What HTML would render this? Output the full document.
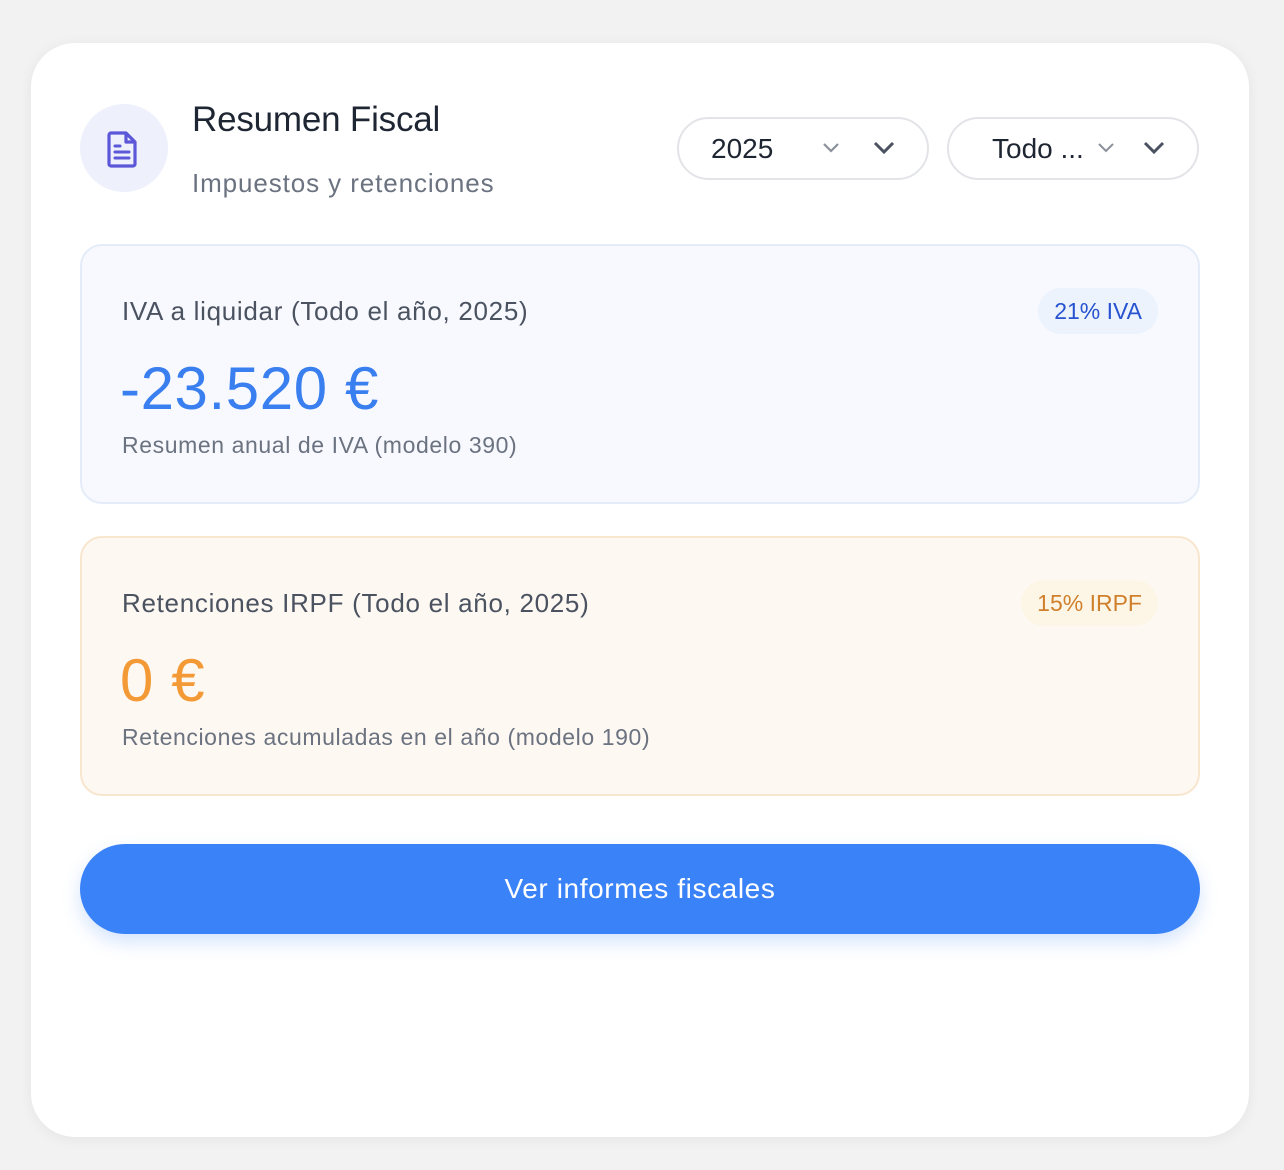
<!DOCTYPE html>
<html><head><meta charset="utf-8"><style>
*{box-sizing:border-box;margin:0;padding:0}
body{width:1284px;height:1170px;background:#f2f2f3;font-family:"Liberation Sans",sans-serif;position:relative;overflow:hidden}
.card{position:absolute;left:31px;top:43px;width:1218px;height:1094px;background:#fff;border-radius:44px;box-shadow:0 2px 14px rgba(0,0,0,.06)}
.abs{position:absolute}
.ic{left:80px;top:104px;width:88px;height:88px;border-radius:50%;background:#eef0fc}
.title{left:192px;top:100px;font-size:35px;color:#1f2633;letter-spacing:-0.2px}
.sub{left:192px;top:168px;font-size:26px;color:#6b7280;letter-spacing:0.9px}
.sel{top:117px;height:63px;border:2px solid #e3e4e8;border-radius:32px;background:#fff;font-size:28px;color:#1f2633}
.box{left:80px;width:1120px;height:260px;border-radius:22px}
.lbl{left:40px;top:50px;font-size:26px;color:#4b5260;letter-spacing:0.7px}
.amt{left:38px;top:108px;font-size:60px;letter-spacing:0.6px}
.note{left:40px;top:186px;font-size:23px;color:#6b7280;letter-spacing:0.6px}
.badge{top:42px;height:46px;border-radius:23px;font-size:23px;line-height:46px;padding:0 16px}
.btn{left:80px;top:844px;width:1120px;height:90px;border-radius:45px;background:#3a82f7;color:#fff;font-size:28px;text-align:center;line-height:90px;box-shadow:0 8px 18px rgba(58,130,247,.22);letter-spacing:0.6px}
</style></head><body>
<div class="card"></div>
<div class="abs ic"><svg class="abs" style="left:26px;top:26px" width="36" height="38" viewBox="0 0 36 38"><path d="M5 3h15l9 9v22a2 2 0 0 1-2 2H5a2 2 0 0 1-2-2V5a2 2 0 0 1 2-2z" fill="none" stroke="#5b57d8" stroke-width="3.2" stroke-linejoin="round"/><path d="M20 3v9h9" fill="none" stroke="#5b57d8" stroke-width="3.2" stroke-linejoin="round"/><path d="M9 16h5M9 22h14M9 28h14" stroke="#5b57d8" stroke-width="3" stroke-linecap="round"/></svg></div>
<div class="abs title">Resumen Fiscal</div>
<div class="abs sub">Impuestos y retenciones</div>
<div class="abs sel" style="left:677px;width:252px"><span class="abs" style="left:32px;top:14px">2025</span>
<svg class="abs" style="left:142px;top:22px" width="20" height="14"><path d="M3 3l7 7 7-7" fill="none" stroke="#8b909a" stroke-width="2.2"/></svg>
<svg class="abs" style="left:193px;top:21px" width="24" height="16"><path d="M3 3l9 9 9-9" fill="none" stroke="#4b5260" stroke-width="3"/></svg></div>
<div class="abs sel" style="left:947px;width:252px"><span class="abs" style="left:43px;top:14px">Todo ...</span>
<svg class="abs" style="left:148px;top:23px" width="18" height="12"><path d="M2 2l7 7 7-7" fill="none" stroke="#8b909a" stroke-width="2"/></svg>
<svg class="abs" style="left:193px;top:21px" width="24" height="16"><path d="M3 3l9 9 9-9" fill="none" stroke="#4b5260" stroke-width="3"/></svg></div>

<div class="abs box" style="top:244px;background:#f7f9fe;border:2px solid #e5ecf9">
<div class="abs lbl">IVA a liquidar (Todo el año, 2025)</div>
<div class="abs badge" style="right:40px;background:#ecf3fd;color:#2752d0">21% IVA</div>
<div class="abs amt" style="color:#3a7ff0">-23.520 €</div>
<div class="abs note">Resumen anual de IVA (modelo 390)</div>
</div>
<div class="abs box" style="top:536px;background:#fdf8f2;border:2px solid #f8e6cf">
<div class="abs lbl">Retenciones IRPF (Todo el año, 2025)</div>
<div class="abs badge" style="right:40px;background:#fdf6e7;color:#d0802c">15% IRPF</div>
<div class="abs amt" style="color:#f39a36">0 €</div>
<div class="abs note">Retenciones acumuladas en el año (modelo 190)</div>
</div>
<div class="abs btn">Ver informes fiscales</div>
</body></html>
